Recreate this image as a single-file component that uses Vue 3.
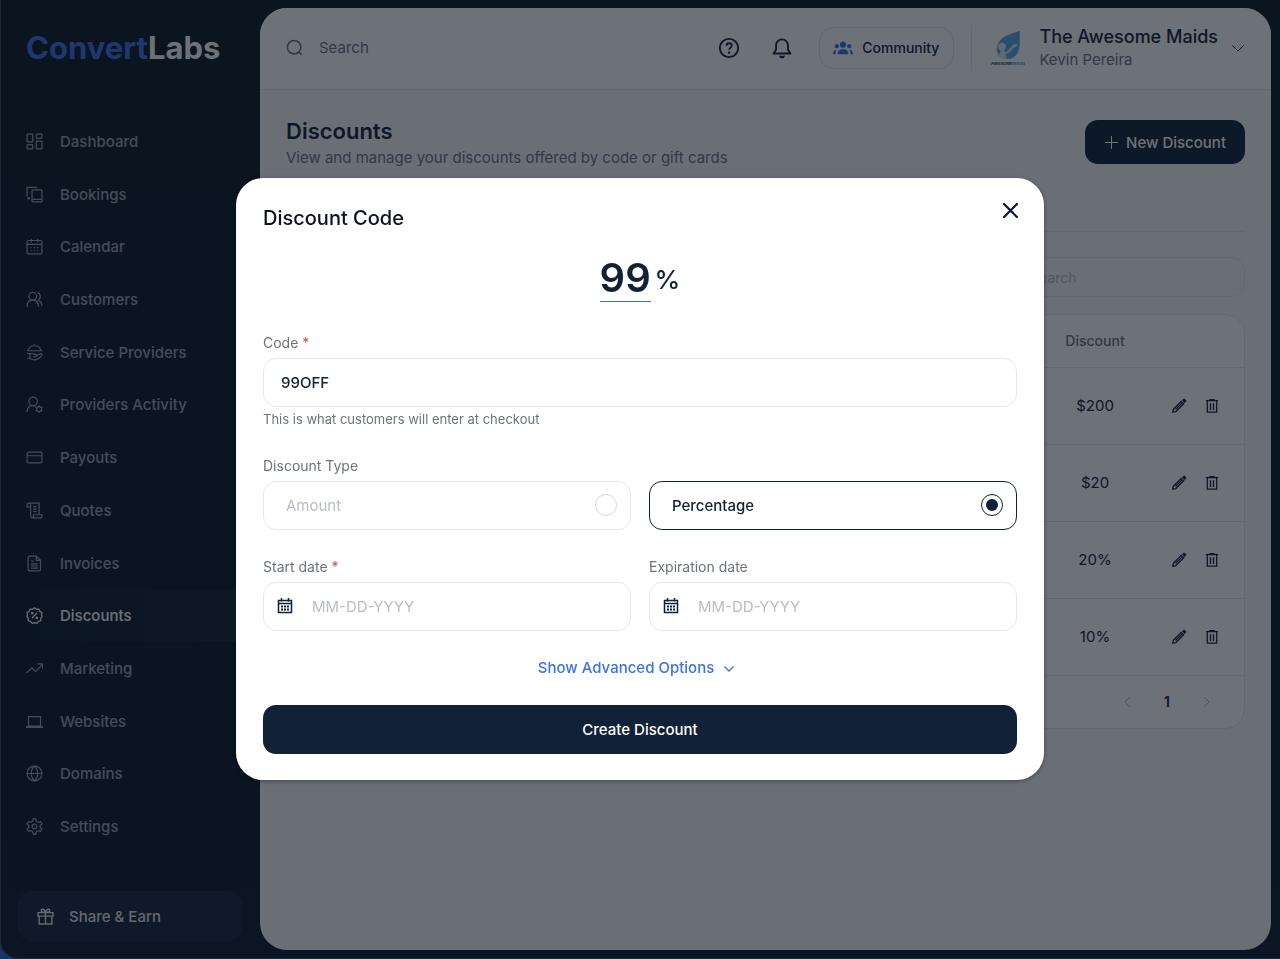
<template>
  <div class="shell">
    <div class="frame">
      <aside class="sidebar">
        <a class="logo" href="#"><span class="logo-blue">Convert</span>Labs</a>

        <nav class="nav" aria-label="Main">
          <a
            v-for="item in navItems"
            :key="item.label"
            href="#"
            class="nav-item"
            :class="{ active: item.label === 'Discounts' }"
          >
            <svg class="nav-icon" viewBox="0 0 24 24" aria-hidden="true">
              <path v-for="d in item.paths" :key="d" :d="d" />
            </svg>
            <span>{{ item.label }}</span>
          </a>
        </nav>

        <a class="share" href="#">
          <svg class="share-icon" viewBox="0 0 24 24" aria-hidden="true">
            <path d="M1.500 6.500h21v5h-21zM3 11.500h18v11H3zM12 6.500v16M12 6.500C8 6.500 5.500 5 6 3s4.500-2.500 6 3.500M12 6.500c4 0 6.500-1.500 6-3.500s-4.500-2.500-6 3.500" />
          </svg>
          <span>Share &amp; Earn</span>
        </a>
      </aside>

      <main class="panel">
        <header class="topbar">
          <label class="top-search">
            <svg class="search-icon" viewBox="0 0 24 24" aria-hidden="true">
              <circle cx="11.500" cy="11.500" r="9.500" />
              <path d="M18 18l4 4" />
            </svg>
            <input type="text" placeholder="Search" aria-label="Search" />
          </label>

          <button class="icon-btn" type="button" aria-label="Help">
            <svg viewBox="0 0 24 24" aria-hidden="true">
              <circle cx="12" cy="12" r="10" />
              <path d="M9.200 9.600c0-1.700 1.200-2.800 2.900-2.800s2.900 1.100 2.900 2.600c0 2.200-2.900 2.400-2.900 4.600" />
              <circle class="dot" cx="12.100" cy="17.100" r="1.300" />
            </svg>
          </button>
          <button class="icon-btn" type="button" aria-label="Notifications">
            <svg viewBox="0 0 24 24" aria-hidden="true">
              <path d="M5.500 9a6.500 6.500 0 0 1 13 0v5l2.800 4H2.700l2.800-4z" stroke-linejoin="round" />
              <path class="dot" d="M9 20.500h6a3 2.800 0 0 1-6 0z" />
            </svg>
          </button>
          <button class="community" type="button">
            <svg viewBox="0 0 24 16" aria-hidden="true">
              <circle cx="12" cy="4" r="3.700" />
              <circle cx="4.600" cy="5.800" r="2.500" />
              <circle cx="19.400" cy="5.800" r="2.500" />
              <path d="M5.500 15.500c0-4 2.500-6 6.500-6s6.500 2 6.500 6zM0 15.500c0-3.500 1.500-5.300 4.800-5.500-1.200 1.300-1.800 3-1.800 5.500zM24 15.500c0-3.500-1.500-5.300-4.800-5.500 1.200 1.300 1.800 3 1.800 5.500z" />
            </svg>
            <span>Community</span>
          </button>

          <button class="account" type="button">
            <svg class="brand" viewBox="0 0 34 36" aria-hidden="true">
              <path fill="#56aae6" d="M29 1c-1 7 1 14-2 21-2 4-5 7-10 7-8 0-12-5-11-12S13 5 29 1z" />
              <path fill="#dce9f2" d="M7 15c2-3 7-3 8 1 0 2-2 3-1 6 3 0 4-3 6-5l3-3c2-1 4 1 2 3-3 0-4 3-6 5l-4 2c-1 2 0 3 1 5-5 0-7-3-9-5 2 0 3-2 2-4-1-1-3-2-2-5z" />
              <text x="0" y="35" font-size="4" font-weight="800">
                <tspan fill="#4b5563">AWESOME</tspan>
                <tspan fill="#56aae6">MAIDS</tspan>
              </text>
            </svg>
            <span class="account-text">
              <span class="account-name">The Awesome Maids</span>
              <span class="account-user">Kevin Pereira</span>
            </span>
            <svg class="chevron" viewBox="0 0 14 14" aria-hidden="true">
              <path d="M1.500 4.500L7 10l5.500-5.500" />
            </svg>
          </button>
        </header>

        <section class="content">
          <div class="heading">
            <div>
              <h1>Discounts</h1>
              <p>View and manage your discounts offered by code or gift cards</p>
            </div>
            <button class="new-btn" type="button">
              <svg viewBox="0 0 13 13" aria-hidden="true">
                <path d="M6.500 0v13M0 6.500h13" />
              </svg>
              <span>New Discount</span>
            </button>
          </div>

          <div class="divider"></div>

          <div class="filter">
            <input type="text" placeholder="Search" aria-label="Search discounts" />
          </div>

          <div class="table-card">
            <table>
              <thead>
                <tr>
                  <th></th>
                  <th class="col-value">Discount</th>
                  <th class="col-actions"></th>
                </tr>
              </thead>
              <tbody>
                <tr v-for="value in discounts" :key="value">
                  <td></td>
                  <td class="col-value">{{ value }}</td>
                  <td class="col-actions">
                    <div class="actions">
                      <button type="button" aria-label="Edit">
                        <svg viewBox="0 0 16 16" aria-hidden="true">
                          <path d="M1.800 14.200l.5-3 7.900-7.900 2.500 2.500-7.900 7.900zM4.500 11.500l6.600-6.600" />
                          <path class="solid" d="M11 2.300l1.400-1.400q.7-.6 1.400 0l1.300 1.300q.6.700 0 1.400L13.700 5z" />
                        </svg>
                      </button>
                      <button type="button" aria-label="Delete">
                        <svg viewBox="0 0 16 16" aria-hidden="true">
                          <path d="M2 2.700h12M5.300 1.600h5.400M3.300 3v11.200h9.400V3M6.500 5.200v6.800M9.500 5.200v6.800" />
                        </svg>
                      </button>
                    </div>
                  </td>
                </tr>
              </tbody>
            </table>
            <div class="pager">
              <button type="button" aria-label="Previous page">
                <svg viewBox="0 0 12 12" aria-hidden="true"><path d="M8 1L3 6l5 5" /></svg>
              </button>
              <span>1</span>
              <button type="button" aria-label="Next page">
                <svg viewBox="0 0 12 12" aria-hidden="true"><path d="M4 1l5 5-5 5" /></svg>
              </button>
            </div>
          </div>
        </section>
      </main>
    </div>

    <div class="overlay">
      <form class="modal" role="dialog" aria-labelledby="modal-title" @submit.prevent>
        <h2 id="modal-title">Discount Code</h2>
        <button class="close" type="button" aria-label="Close">
          <svg viewBox="0 0 14 14" aria-hidden="true"><path d="M1 1l12 12M13 1L1 13" /></svg>
        </button>

        <div class="amount">
          <input v-model="amount" type="text" aria-label="Discount value" />
          <span>%</span>
        </div>

        <div class="field">
          <label for="code">Code <em>*</em></label>
          <input id="code" v-model="code" class="box" type="text" />
          <small>This is what customers will enter at checkout</small>
        </div>

        <fieldset class="field">
          <legend>Discount Type</legend>
          <div class="pair">
            <label
              v-for="option in types"
              :key="option"
              class="box choice"
              :class="{ selected: type === option }"
            >
              <span>{{ option }}</span>
              <input v-model="type" type="radio" name="type" :value="option" />
            </label>
          </div>
        </fieldset>

        <div class="pair dates">
          <div v-for="date in dates" :key="date.id" class="field">
            <label :for="date.id">{{ date.label }} <em v-if="date.required">*</em></label>
            <div class="box date">
              <svg viewBox="0 0 16 16" aria-hidden="true">
                <path class="line" d="M1.500 2.500h13v12h-13zM1.500 5.500h13" />
                <path class="line" d="M4.500 0v3.500M11.500 0v3.500" />
                <path d="M4 7.500h2v2H4zM7 7.500h2v2H7zM10 7.500h2v2h-2zM4 10.500h2v2H4zM7 10.500h2v2H7zM10 10.500h2v2h-2z" />
              </svg>
              <input :id="date.id" type="text" placeholder="MM-DD-YYYY" />
            </div>
          </div>
        </div>

        <button class="advanced" type="button">
          <span>Show Advanced Options</span>
          <svg viewBox="0 0 26 26" aria-hidden="true"><path d="M8.500 11.500l4.500 4.500 4.500-4.500" /></svg>
        </button>

        <button class="submit" type="submit">Create Discount</button>
      </form>
    </div>
  </div>
</template>

<script setup>
import { ref } from 'vue'

const amount = ref('99')
const code = ref('99OFF')
const type = ref('Percentage')

const types = ['Amount', 'Percentage']
const discounts = ['$200', '$20', '20%', '10%']

const dates = [
  { id: 'start-date', label: 'Start date', required: true },
  { id: 'expiration-date', label: 'Expiration date', required: false },
]

const navItems = [
  {
    label: 'Dashboard',
    paths: [
      'M2.500 1.500h6a1 1 0 0 1 1 1v9a1 1 0 0 1-1 1h-6a1 1 0 0 1-1-1v-9a1 1 0 0 1 1-1zM15.500 11.500h6a1 1 0 0 1 1 1v9a1 1 0 0 1-1 1h-6a1 1 0 0 1-1-1v-9a1 1 0 0 1 1-1z',
      'M15.500 1.500h6a1 1 0 0 1 1 1v4a1 1 0 0 1-1 1h-6a1 1 0 0 1-1-1v-4a1 1 0 0 1 1-1zM2.500 16.500h6a1 1 0 0 1 1 1v4a1 1 0 0 1-1 1h-6a1 1 0 0 1-1-1v-4a1 1 0 0 1 1-1z',
    ],
  },
  {
    label: 'Bookings',
    paths: ['M10 5.500h11a1.500 1.500 0 0 1 1.500 1.500v14a1.500 1.500 0 0 1-1.500 1.500H10a1.500 1.500 0 0 1-1.500-1.500V7a1.500 1.500 0 0 1 1.500-1.500zM8.500 19h14', 'M16 2H1.500v13M1.500 17.500h4M4 15.500v4'],
  },
  {
    label: 'Calendar',
    paths: [
      'M3.500 3.500h17a2 2 0 0 1 2 2v15a2 2 0 0 1-2 2h-17a2 2 0 0 1-2-2v-15a2 2 0 0 1 2-2zM1.500 9h21M7.500 1v5M16.500 1v5',
      'M6.500 13.500h1.500M11.300 13.500h1.500M16 13.500h1.500M6.500 18h1.500M11.300 18h1.500M16 18h1.500',
    ],
  },
  {
    label: 'Customers',
    paths: [
      'M9.500 2a5.500 5.500 0 1 1 0 11a5.500 5.500 0 0 1 0-11z',
      'M1.500 22.500c0-6 3-9.500 8-9.500s8 3.500 8 9.500',
      'M16 2.500c5 1 5.500 8 1.500 10.500c3 1.500 5 4.500 5 8.500',
    ],
  },
  {
    label: 'Service Providers',
    paths: [
      'M3 9.500c1-5 5-7 9-7s8 2 9 7zM12 2.500V.8M1 9.500h22',
      'M1.500 13.500h4v7h-4M5.500 14c4-2 6 1 8.500 1s2 3-1 3h-3M14 17l6.500-3.500c2-.5 2.500 1 1.500 2.500-3 4-6 6.500-10 6.500-3 0-4-1.500-6.500-2',
    ],
  },
  {
    label: 'Providers Activity',
    paths: [
      'M10 1.500a6 6 0 1 1 0 12a6 6 0 0 1 0-12z',
      'M1.500 22.500c0-5.500 3-9 8-9c1.500 0 3 .3 4 1',
      'M18.500 15a3.500 3.500 0 1 1 0 7a3.500 3.500 0 0 1 0-7zM18.500 13v2M18.500 22v2M13.500 15.800l2 1M21.500 20.200l2 1M13.500 21.200l2-1M21.500 16.800l2-1',
    ],
  },
  {
    label: 'Payouts',
    paths: ['M3.500 4.500h17a2 2 0 0 1 2 2v11a2 2 0 0 1-2 2h-17a2 2 0 0 1-2-2v-11a2 2 0 0 1 2-2zM1.500 9.500h21'],
  },
  {
    label: 'Quotes',
    paths: [
      'M5 7H1.500V4a2.500 2.500 0 0 1 5 0v16a2.500 2.500 0 0 0 2.500 2.500M4 1.500h14.500V18M9 22.500h11.500a2 2 0 0 0 2-2V18H10.500v2.500a2 2 0 0 1-1.500 2',
      'M10 6.500h5M10 10h5M10 13.500h5',
    ],
  },
  {
    label: 'Invoices',
    paths: [
      'M5 1.500h9.500l6 6V20.500a2 2 0 0 1-2 2H5a2 2 0 0 1-2-2v-17a2 2 0 0 1 2-2zM14.500 1.500v6h6',
      'M7 8.500h4M7 12.500h10M7 15.500h10M7 18.500h10',
    ],
  },
  {
    label: 'Discounts',
    paths: [
      'M12 1.200l2.800 2 3.400-.3 1.200 3.200 3 1.500-.5 3.300 1 2.500-2 2.500-.2 3.500-3.300 1-2 2.700-3.400-1-3.400 1-2-2.700-3.300-1-.2-3.500-2-2.500 1-2.500-.5-3.300 3-1.500L5.800 2.900l3.400.3z',
      'M15.500 8.500l-7 7M8 8h1.500v1.500H8zM14.500 14.500H16V16h-1.500z',
    ],
  },
  { label: 'Marketing', paths: ['M.5 18.500l8-7.500 5 5L23 6.500M16 5.500h7.500v7'] },
  { label: 'Websites', paths: ['M3.500 5h17v13.500h-17zM.5 19.500h23v1H.5z'] },
  {
    label: 'Domains',
    paths: [
      'M12 1.500a10.500 10.500 0 1 1 0 21a10.500 10.500 0 0 1 0-21zM1.500 12h21',
      'M12 1.500c-6 5.500-6 15.500 0 21c6-5.500 6-15.500 0-21z',
    ],
  },
  {
    label: 'Settings',
    paths: [
      'M9.700 4.200L10.500 1h3l.8 3.200 3 1.800 3.200-.9 2 3.200L20 10.500v3l2.500 2.200-2 3.200-3.200-.9-3 1.800-.8 3.200h-3l-.8-3.200-3-1.800-3.200.9-2-3.200L4 13.500v-3L1.500 8.300l2-3.200 3.200.9z',
      'M12 8.700a3.300 3.300 0 1 1 0 6.600a3.300 3.300 0 0 1 0-6.600z',
    ],
  },
]
</script>

<style>
body {
  background: #1f6fd0;
}
</style>

<style scoped>
.shell {
  font-family: Inter, "Liberation Sans", sans-serif;
  color: #112137;
}

.shell *,
.shell *::before {
  box-sizing: border-box;
}

button,
input {
  font: inherit;
  color: inherit;
}

button {
  padding: 0;
  border: 0;
  background: none;
  cursor: pointer;
}

input {
  min-width: 0;
  border: 0;
  outline: 0;
  background: none;
}

a {
  color: inherit;
  text-decoration: none;
}

svg {
  display: block;
  flex: none;
  fill: none;
  stroke: currentColor;
}

.frame {
  display: flex;
  height: 100vh;
  padding: 8px 9px 8px 0;
  border-left: 1px solid #39485a;
  border-bottom: 1px solid #39485a;
  border-radius: 0 0 0 18px;
  background: linear-gradient(#0a1a24, #0a1a2b);
}

/* Sidebar */
.sidebar {
  display: flex;
  flex-direction: column;
  width: 259px;
  flex: none;
}

.logo {
  margin: 20px 0 0 25px;
  height: 40px;
  font-size: 31px;
  line-height: 40px;
  font-weight: 700;
  color: #fff;
}

.logo-blue {
  color: #3b72e8;
}

.nav {
  flex: 1;
  display: flex;
  flex-direction: column;
  margin: 47px 0 38px;
}

.nav-item {
  flex: 1;
  display: flex;
  align-items: center;
  gap: 17px;
  padding-left: 25px;
  font-size: 15px;
  font-weight: 500;
  color: #9ca3af;
}

.nav-item.active {
  color: #fff;
  background: linear-gradient(90deg, transparent, rgba(255, 255, 255, 0.05));
}

.nav-icon {
  width: 17px;
  height: 17px;
  stroke-width: 1.7;
}

.share {
  display: flex;
  align-items: center;
  gap: 15px;
  height: 50px;
  margin: 0 18px 9px 17px;
  padding-left: 19px;
  border-radius: 14px;
  background: #18243a;
  font-size: 15px;
  font-weight: 500;
  color: #e5e7eb;
}

.share-icon {
  width: 17px;
  height: 17px;
  stroke-width: 2;
}

/* Main panel */
.panel {
  flex: 1;
  min-width: 0;
  border-radius: 27px;
  background: #f8f9fb;
  overflow: hidden;
}

.topbar {
  display: flex;
  align-items: center;
  height: 82px;
  padding: 0 26px 2px;
  border-bottom: 1px solid #e5e7eb;
  background: #fff;
}

.top-search {
  flex: 1;
  display: flex;
  align-items: center;
  gap: 16px;
  color: #6b7280;
}

.top-search input {
  flex: 1;
  padding: 0;
  font-size: 15px;
}

.top-search input::placeholder {
  color: #6b7280;
}

.search-icon {
  width: 17px;
  height: 17px;
  stroke-width: 2.2;
}

.icon-btn {
  margin-right: 31px;
}

.icon-btn svg {
  width: 22px;
  height: 22px;
  stroke-width: 2;
}

.icon-btn .dot {
  fill: currentColor;
  stroke: none;
}

.community {
  display: flex;
  align-items: center;
  gap: 9px;
  height: 42px;
  margin-left: -5px;
  padding: 0 14px 0 13px;
  border: 1px solid #e5e7eb;
  border-radius: 14px;
  font-size: 14px;
  font-weight: 500;
}

.community svg {
  width: 20px;
  height: 14px;
  fill: #3b72e8;
  stroke: none;
}

.account {
  display: flex;
  align-items: center;
  height: 46px;
  margin-left: 17px;
  padding-left: 19px;
  border-left: 1px solid #e5e7eb;
  text-align: left;
}

.brand {
  width: 34px;
  height: 36px;
  stroke: none;
}

.account-text {
  display: flex;
  flex-direction: column;
  margin: 0 13px 0 14px;
}

.account-name {
  font-size: 18px;
  line-height: 24px;
  font-weight: 500;
}

.account-user {
  font-size: 15px;
  line-height: 22px;
  color: #6b7280;
}

.chevron {
  width: 14px;
  height: 14px;
}

.content {
  padding: 30px 26px;
}

.heading {
  display: flex;
  justify-content: space-between;
  align-items: flex-start;
}

h1 {
  margin: 0;
  font-size: 22px;
  line-height: 22px;
  font-weight: 600;
}

.heading p {
  margin: 4px 0 0;
  font-size: 15px;
  line-height: 24px;
  color: #6b7280;
}

.new-btn {
  display: flex;
  align-items: center;
  gap: 8px;
  height: 44px;
  padding: 0 19px 0 20px;
  border-radius: 13px;
  background: #112137;
  font-size: 15px;
  font-weight: 500;
  color: #fff;
}

.new-btn svg {
  width: 13px;
  height: 13px;
}

.divider {
  height: 1px;
  margin-top: 61px;
  background: #e5e7eb;
}

.filter {
  display: flex;
  justify-content: flex-end;
  margin: 25px 0 17px;
}

.filter input {
  width: 260px;
  height: 40px;
  padding: 0 44px;
  border: 1px solid #e5e7eb;
  border-radius: 14px;
  font-size: 14px;
}

.filter input::placeholder {
  color: #b6bac2;
}

.table-card {
  border: 1px solid #e5e7eb;
  border-radius: 20px;
  background: #fff;
}

table {
  width: 100%;
  border-collapse: collapse;
  table-layout: fixed;
}

th,
td {
  height: 77px;
  padding: 0;
  border-bottom: 1px solid #e5e7eb;
  font-size: 15px;
}

th {
  height: 52px;
  font-size: 14px;
  font-weight: 500;
  color: #6b7280;
}

.col-value {
  width: 100px;
  text-align: center;
}

.col-actions {
  width: 99px;
}

.actions {
  display: flex;
  justify-content: flex-end;
  gap: 17px;
  padding-right: 24px;
}

.actions svg {
  width: 16px;
  height: 16px;
  stroke-width: 1.3;
}

.actions .solid {
  fill: currentColor;
  stroke: none;
}

.pager {
  display: flex;
  align-items: center;
  justify-content: flex-end;
  gap: 30px;
  height: 52px;
  padding-right: 32px;
  font-size: 14px;
  font-weight: 600;
}

.pager button {
  color: #b6bac2;
}

.pager svg {
  width: 12px;
  height: 12px;
}

/* Modal */
.overlay {
  position: fixed;
  inset: 0;
  display: flex;
  align-items: center;
  justify-content: center;
  padding-bottom: 2px;
  background: rgba(12, 19, 30, 0.6);
}

.modal {
  position: relative;
  display: flex;
  flex-direction: column;
  width: 808px;
  max-width: 94vw;
  padding: 26px 27px;
  border-radius: 27px;
  background: #fff;
  box-shadow: 0 1px 4px rgba(0, 0, 0, 0.4);
}

h2 {
  margin: 0;
  font-size: 20px;
  line-height: 28px;
  font-weight: 500;
  color: #0b1220;
}

.close {
  position: absolute;
  top: 25px;
  right: 26px;
  color: #0b1220;
}

.close svg {
  width: 15px;
  height: 15px;
  stroke-width: 2;
  stroke-linecap: round;
}

.amount {
  display: flex;
  align-items: flex-end;
  justify-content: center;
  gap: 4px;
  margin-top: 22px;
}

.amount input {
  width: 51px;
  height: 48px;
  padding: 0;
  border-bottom: 1px solid #3b72e8;
  font-size: 40px;
  font-weight: 600;
  text-align: center;
}

.amount span {
  font-size: 26px;
  line-height: 44px;
  font-weight: 500;
}

.field {
  display: flex;
  flex-direction: column;
  margin: 31px 0 0;
  padding: 0;
  border: 0;
  min-width: 0;
}

.field > label,
legend {
  display: block;
  margin-bottom: 5px;
  padding: 0;
  font-size: 14px;
  line-height: 20px;
  color: #6b7280;
}

em {
  font-style: normal;
  color: #e0433a;
}

.field small {
  margin-top: 2px;
  font-size: 13px;
  line-height: 20px;
  color: #6b7280;
}

.box {
  height: 49px;
  padding: 0 17px;
  border: 1px solid #e5e7eb;
  border-radius: 13px;
  font-size: 15px;
  font-weight: 500;
}

.pair {
  display: grid;
  grid-template-columns: 1fr 1fr;
  gap: 18px;
}

fieldset.field,
.dates .field {
  margin-top: 27px;
}

.choice {
  display: flex;
  align-items: center;
  justify-content: space-between;
  padding: 0 13px 0 22px;
  font-weight: 400;
  color: #b9bdc7;
}

.choice input {
  appearance: none;
  width: 22px;
  height: 22px;
  margin: 0;
  padding: 4px;
  border: 1px solid #d5d7e0;
  border-radius: 50%;
}

.choice.selected {
  border-color: #112137;
  font-weight: 500;
  color: #112137;
}

.choice input:checked {
  border-color: #112137;
  background: #112137 content-box;
}

.date {
  display: flex;
  align-items: center;
  gap: 19px;
  padding: 0 13px;
}

.date svg {
  width: 16px;
  height: 16px;
  fill: currentColor;
  stroke: none;
}

.date .line {
  fill: none;
  stroke: currentColor;
  stroke-width: 1.5;
}

.date input {
  flex: 1;
  padding: 0;
  font-weight: 400;
}

.date input::placeholder {
  color: #b9bdc7;
}

.advanced {
  display: flex;
  align-items: center;
  justify-content: center;
  gap: 2px;
  margin: 24px 0;
  font-size: 15px;
  line-height: 26px;
  font-weight: 500;
  color: #3b72e8;
}

.advanced svg {
  width: 26px;
  height: 26px;
  stroke-width: 1.3;
}

.submit {
  height: 49px;
  border-radius: 13px;
  background: #112137;
  font-size: 15px;
  font-weight: 500;
  color: #fff;
}
</style>
